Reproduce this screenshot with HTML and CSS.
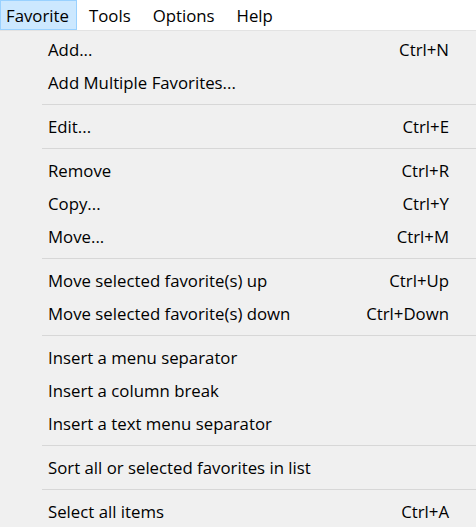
FILE: index.html
```html
<!DOCTYPE html>
<html>
<head>
<meta charset="utf-8">
<link rel="stylesheet" href="styles.css">
</head>
<body>
<div class="menubar">
  <span class="top active">Favorite</span>
  <span class="top">Tools</span>
  <span class="top">Options</span>
  <span class="top">Help</span>
</div>
<div class="dropdown">
  <div class="item"><span>Add...</span><span class="key">Ctrl+N</span></div>
  <div class="item"><span>Add Multiple Favorites...</span><span class="key"></span></div>
  <div class="sep"></div>
  <div class="item"><span>Edit...</span><span class="key">Ctrl+E</span></div>
  <div class="sep"></div>
  <div class="item"><span>Remove</span><span class="key">Ctrl+R</span></div>
  <div class="item"><span>Copy...</span><span class="key">Ctrl+Y</span></div>
  <div class="item"><span>Move...</span><span class="key">Ctrl+M</span></div>
  <div class="sep"></div>
  <div class="item"><span>Move selected favorite(s) up</span><span class="key">Ctrl+Up</span></div>
  <div class="item"><span>Move selected favorite(s) down</span><span class="key">Ctrl+Down</span></div>
  <div class="sep"></div>
  <div class="item"><span>Insert a menu separator</span><span class="key"></span></div>
  <div class="item"><span>Insert a column break</span><span class="key"></span></div>
  <div class="item"><span>Insert a text menu separator</span><span class="key"></span></div>
  <div class="sep"></div>
  <div class="item"><span>Sort all or selected favorites in list</span><span class="key"></span></div>
  <div class="sep"></div>
  <div class="item"><span>Select all items</span><span class="key">Ctrl+A</span></div>
</div>
</body>
</html>
```
FILE: styles.css
```css
html, body {
  margin: 0;
  padding: 0;
  background: #f0f0f0;
  overflow: hidden;
}
body {
  font-family: "Open Sans", "Noto Sans", sans-serif;
  font-size: 16.8px;
  color: #000;
  width: 476px;
  height: 527px;
}
.menubar {
  display: flex;
  height: 30px;
  background: #fff;
  border-bottom: 1px solid #e3e3e3;
}
.top {
  display: flex;
  align-items: center;
  padding: 0 9px;
  margin-right: 2px;
  box-sizing: border-box;
  height: 30px;
  border: 1px solid transparent;
}
.top.active {
  background: #cce8ff;
  border-color: #99d1ff;
  padding-left: 5px;
  padding-right: 7px;
}
.dropdown {
  background: #f0f0f0;
  padding-top: 2px;
  display: flex;
  flex-direction: column;
}
.item {
  display: flex;
  justify-content: space-between;
  align-items: center;
  height: 33px;
  padding: 0 27px 0 48px;
}
.sep {
  height: 1px;
  background: #d7d7d7;
  margin: 5px 0 5px 42px;
}
```
